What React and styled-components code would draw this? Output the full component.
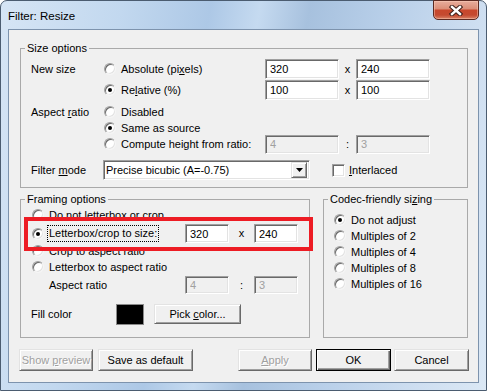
import React from 'react';
import styled, { createGlobalStyle, css } from 'styled-components';

const GlobalStyle = createGlobalStyle`
  html, body {
    margin: 0;
    padding: 0;
    background: #ffffff;
  }
  body {
    font-family: "Liberation Sans", Arial, sans-serif;
    -webkit-font-smoothing: antialiased;
  }
`;

const Frame = styled.div`
  width: 487px;
  height: 391px;
  box-sizing: border-box;
  border: 1px solid #4b5c70;
  border-radius: 7px 7px 0 0;
  background: linear-gradient(100deg, #d6e5f5 0%, #c2d8ef 22%, #adc8e6 38%, #c5daf0 47%, #a7c1de 56%, #b8cfe9 70%, #cfdff1 88%, #dbe8f5 100%);
  padding: 0 7px 7px;
  display: flex;
  flex-direction: column;
`;

const TitleBar = styled.div`
  height: 28px;
  display: flex;
  align-items: center;
  justify-content: space-between;
`;

const TitleText = styled.span`
  font-size: 11.5px;
  color: #000;
  margin-top: 1px;
`;

const CloseButton = styled.div`
  align-self: flex-start;
  margin-top: -1px;
  width: 46px;
  height: 20px;
  box-sizing: border-box;
  border: 1px solid #5c2a22;
  border-radius: 0 0 5px 5px;
  background: linear-gradient(#e8ad9d 0%, #dc8f79 42%, #c8472c 52%, #c44a30 78%, #d98267 100%);
  box-shadow: inset 0 0 0 1px rgba(255, 210, 190, 0.45);
  display: flex;
  align-items: center;
  justify-content: center;
`;

const Client = styled.div`
  flex: 1;
  background: #f0f0f0;
  border: 1px solid #7d93ad;
  padding: 18px 10px 0 11px;
  display: flex;
  flex-direction: column;
  font-size: 11px;
  line-height: 13px;
  color: #000;
`;

const Group = styled.div`
  position: relative;
  box-sizing: border-box;
  border: 1px solid #a9a9a9;
  height: ${({ $h }) => $h}px;
  width: ${({ $w }) => ($w ? `${$w}px` : 'auto')};
  padding: ${({ $pad }) => $pad};
  flex-shrink: 0;
`;

const GroupTitle = styled.span`
  position: absolute;
  top: -7px;
  left: 4px;
  padding: 0 2px;
  background: #f0f0f0;
  line-height: 13px;
  white-space: nowrap;
`;

const Row = styled.div`
  display: flex;
  align-items: center;
  height: ${({ $h }) => $h || 16}px;
  margin-top: ${({ $mt }) => $mt || 0}px;
`;

const Label = styled.span`
  flex-shrink: 0;
  width: ${({ $w }) => $w}px;
  padding-left: ${({ $pl }) => $pl || 0}px;
  box-sizing: border-box;
  white-space: nowrap;
`;

const Choice = styled.label`
  display: flex;
  align-items: center;
  gap: ${({ $gap }) => $gap || 5}px;
  flex-shrink: 0;
  width: ${({ $w }) => ($w ? `${$w}px` : 'auto')};
  padding-left: ${({ $pl }) => $pl || 0}px;
  box-sizing: border-box;
  white-space: nowrap;
`;

const Focus = styled.span`
  outline: 1px dotted #000;
  outline-offset: 1px;
`;

const RadioDot = styled.span`
  position: relative;
  flex-shrink: 0;
  width: 12px;
  height: 12px;
  box-sizing: border-box;
  border-radius: 50%;
  background: #fff;
  border: 1px solid;
  border-color: #a0a0a0 #f4f4f4 #f4f4f4 #a0a0a0;
  box-shadow: inset 1px 1px 0 #696969, inset -1px -1px 0 #e3e3e3;

  ${({ $on }) =>
    $on &&
    css`
      &::after {
        content: '';
        position: absolute;
        left: 3px;
        top: 3px;
        width: 4px;
        height: 4px;
        border-radius: 50%;
        background: #000;
      }
    `}
`;

const CheckBox = styled.span`
  flex-shrink: 0;
  width: 13px;
  height: 13px;
  box-sizing: border-box;
  background: #fff;
  border: 1px solid;
  border-color: #a0a0a0 #fff #fff #a0a0a0;
  box-shadow: inset 1px 1px 0 #696969, inset -1px -1px 0 #e3e3e3;
`;

const Field = styled.input`
  box-sizing: border-box;
  width: ${({ $w }) => $w}px;
  height: ${({ $h }) => $h}px;
  margin: 0;
  padding: 0 0 0 4px;
  font: inherit;
  font-size: 11px;
  color: #000;
  background: #fff;
  border: 1px solid;
  border-color: #a0a0a0 #fff #fff #a0a0a0;
  box-shadow: inset 1px 1px 0 #696969, inset -1px -1px 0 #e3e3e3;
  outline: none;
  flex-shrink: 0;

  &:disabled {
    background: #f0f0f0;
    color: #a0a0a0;
    -webkit-text-fill-color: #a0a0a0;
  }
`;

const Sep = styled.span`
  flex-shrink: 0;
  width: ${({ $w }) => $w}px;
  text-align: center;
`;

const Select = styled.div`
  box-sizing: border-box;
  width: 207px;
  height: 20px;
  margin-left: -1px;
  background: #fff;
  border: 1px solid;
  border-color: #a0a0a0 #fff #fff #a0a0a0;
  box-shadow: inset 1px 1px 0 #696969, inset -1px -1px 0 #e3e3e3;
  display: flex;
  align-items: center;
  justify-content: space-between;
  padding: 0 2px 0 2px;
  flex-shrink: 0;
`;

const DropButton = styled.span`
  width: 16px;
  height: 16px;
  box-sizing: border-box;
  background: #f0f0f0;
  border: 1px solid;
  border-color: #e3e3e3 #696969 #696969 #e3e3e3;
  box-shadow: inset 1px 1px 0 #fff, inset -1px -1px 0 #a0a0a0;
  display: flex;
  align-items: center;
  justify-content: center;
`;

const Swatch = styled.span`
  width: 28px;
  height: 21px;
  box-sizing: border-box;
  background: #000;
  border: 1px solid #8a8a8a;
  flex-shrink: 0;
`;

const Button = styled.div`
  box-sizing: border-box;
  width: ${({ $w }) => $w}px;
  height: ${({ $h }) => $h || 22}px;
  margin-left: ${({ $ml }) => $ml || 0}px;
  flex-shrink: 0;
  display: flex;
  align-items: center;
  justify-content: center;
  background: #f0f0f0;
  border: 1px solid;
  border-color: #e3e3e3 #696969 #696969 #e3e3e3;
  box-shadow: inset 1px 1px 0 #fff, inset -1px -1px 0 #a0a0a0;
  color: ${({ $off }) => ($off ? '#a0a0a0' : '#000')};
  text-shadow: ${({ $off }) => ($off ? '1px 1px 0 #fff' : 'none')};
  white-space: nowrap;

  ${({ $default }) =>
    $default &&
    css`
      border-color: #000;
      box-shadow: inset 1px 1px 0 #fff, inset -1px -1px 0 #696969, inset -2px -2px 0 #a0a0a0;
    `}
`;

const U = styled.span`
  text-decoration: underline;
  text-underline-offset: 1px;
`;

const Columns = styled.div`
  display: flex;
  margin-top: 11px;
  gap: 13px;
`;

const Highlight = styled.div`
  position: absolute;
  left: 3px;
  top: 17px;
  width: 289px;
  height: 34px;
  box-sizing: border-box;
  border: 4px solid #ed1c24;
  pointer-events: none;
`;

const ButtonBar = styled.div`
  display: flex;
  align-items: center;
  margin: 11px -1px 0 -1px;
`;

const Radio = ({ on, w, pl, children }) => (
  <Choice $w={w} $pl={pl}>
    <RadioDot $on={on} />
    <span>{children}</span>
  </Choice>
);

const CloseGlyph = () => (
  <svg width="14" height="11" viewBox="0 0 14 11">
    <path d="M3 2 L11 9 M11 2 L3 9" stroke="#3a1d18" strokeWidth="4.4" strokeLinecap="square" fill="none" />
    <path d="M3 2 L11 9 M11 2 L3 9" stroke="#ffffff" strokeWidth="2.4" strokeLinecap="square" fill="none" />
  </svg>
);

const DownArrow = () => (
  <svg width="7" height="4" viewBox="0 0 7 4">
    <polygon points="0,0 7,0 3.5,4" fill="#000" />
  </svg>
);

const codecOptions = ['Do not adjust', 'Multiples of 2', 'Multiples of 4', 'Multiples of 8', 'Multiples of 16'];

export default function App() {
  return (
    <>
      <GlobalStyle />
      <Frame>
        <TitleBar>
          <TitleText>Filter: Resize</TitleText>
          <CloseButton>
            <CloseGlyph />
          </CloseButton>
        </TitleBar>

        <Client>
          <Group $h={140} $pad="10px 0 0 10px">
            <GroupTitle>Size options</GroupTitle>
            <Row $h={20}>
              <Label $w={73}>New size</Label>
              <Radio w={161}>
                Absolute (pi<U>x</U>els)
              </Radio>
              <Field $w={74} $h={20} defaultValue="320" readOnly />
              <Sep $w={17}>x</Sep>
              <Field $w={74} $h={20} defaultValue="240" readOnly />
            </Row>
            <Row $h={20} $mt={1}>
              <Label $w={73} />
              <Radio w={161} on>
                Re<U>l</U>ative (%)
              </Radio>
              <Field $w={74} $h={20} defaultValue="100" readOnly />
              <Sep $w={17}>x</Sep>
              <Field $w={74} $h={20} defaultValue="100" readOnly />
            </Row>
            <Row $mt={4}>
              <Label $w={73}>
                Aspect <U>r</U>atio
              </Label>
              <Radio w={161}>Disabled</Radio>
            </Row>
            <Row>
              <Label $w={73} />
              <Radio w={161} on>
                Same as source
              </Radio>
            </Row>
            <Row>
              <Label $w={73} />
              <Radio w={161}>Compute height from ratio:</Radio>
              <Field $w={74} $h={19} defaultValue="4" disabled />
              <Sep $w={17}>:</Sep>
              <Field $w={74} $h={19} defaultValue="3" disabled />
            </Row>
            <Row $h={20} $mt={8}>
              <Label $w={73}>
                Filter <U>m</U>ode
              </Label>
              <Select>
                <span>Precise bicubic (A=-0.75)</span>
                <DropButton>
                  <DownArrow />
                </DropButton>
              </Select>
              <Choice $pl={22} $gap={4}>
                <CheckBox />
                <span>
                  <U>I</U>nterlaced
                </span>
              </Choice>
            </Row>
          </Group>

          <Columns>
            <Group $h={139} $w={290} $pad="7px 0 0 10px">
              <GroupTitle>Framing options</GroupTitle>
              <Row>
                <Radio pl={1}>Do not letterbox or crop</Radio>
              </Row>
              <Row $h={19} $mt={1}>
                <Choice $w={154} $pl={1}>
                  <RadioDot $on />
                  <Focus>Letterbox/crop to size:</Focus>
                </Choice>
                <Field $w={44} $h={19} defaultValue="320" readOnly />
                <Sep $w={25}>x</Sep>
                <Field $w={44} $h={19} defaultValue="240" readOnly />
              </Row>
              <Row>
                <Radio pl={1}>Crop to aspect ratio</Radio>
              </Row>
              <Row>
                <Radio pl={1}>Letterbox to aspect ratio</Radio>
              </Row>
              <Row $h={18} $mt={1}>
                <Label $w={154} $pl={18}>
                  Aspect ratio
                </Label>
                <Field $w={44} $h={18} defaultValue="4" disabled />
                <Sep $w={25}>:</Sep>
                <Field $w={44} $h={18} defaultValue="3" disabled />
              </Row>
              <Row $h={22} $mt={9}>
                <Label $w={85}>Fill color</Label>
                <Swatch />
                <Button $w={87} $h={20} $ml={10}>
                  <span>
                    Pick <U>c</U>olor...
                  </span>
                </Button>
              </Row>
              <Highlight />
            </Group>

            <Group $h={139} $w={145} $pad="12px 0 0 10px">
              <GroupTitle>
                Codec-friendly si<U>z</U>ing
              </GroupTitle>
              {codecOptions.map((label, i) => (
                <Row key={label}>
                  <Radio on={i === 0}>{label}</Radio>
                </Row>
              ))}
            </Group>
          </Columns>

          <ButtonBar>
            <Button $w={74} $off>
              <span>
                Show <U>p</U>review
              </span>
            </Button>
            <Button $w={95} $ml={5}>
              <span>Save as default</span>
            </Button>
            <Button $w={74} $off style={{ marginLeft: 'auto' }}>
              <span>
                <U>A</U>pply
              </span>
            </Button>
            <Button $w={75} $ml={4} $default>
              <span>OK</span>
            </Button>
            <Button $w={75} $ml={3}>
              <span>Cancel</span>
            </Button>
          </ButtonBar>
        </Client>
      </Frame>
    </>
  );
}
